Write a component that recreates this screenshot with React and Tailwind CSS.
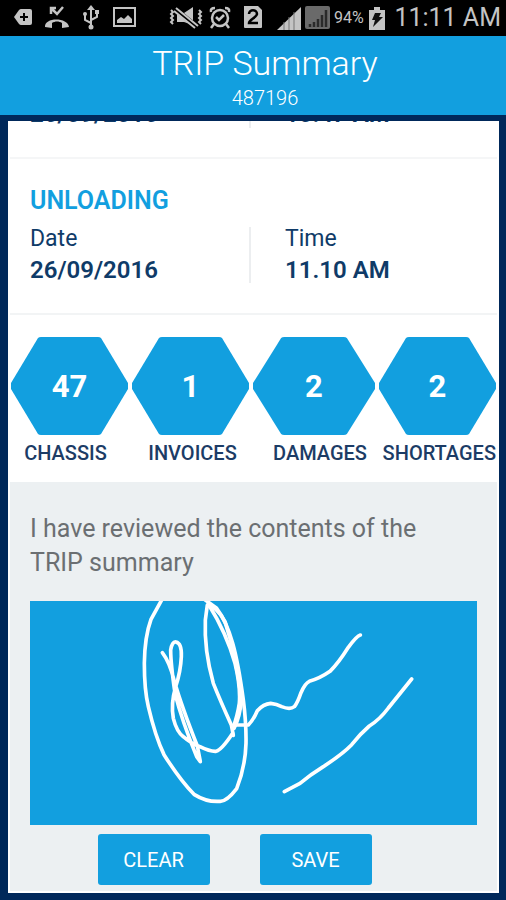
import React from 'react';

const stats = [
  { label: 'CHASSIS', value: 47, align: 'pr-2 text-center' },
  { label: 'INVOICES', value: 1, align: 'pl-1 text-center' },
  { label: 'DAMAGES', value: 2, align: 'pl-3 text-center' },
  { label: 'SHORTAGES', value: 2, align: 'text-right' },
];

const StatusBar = () => {
  return (
    <div className="flex h-9 items-center bg-black pl-3 pr-[5px] text-[#c4c4c4]">
      <svg viewBox="0 0 192 32" className="h-8 w-[192px] shrink-0" fill="none" stroke="currentColor">
        {/* battery saver tag */}
        <path d="M2 15l5-7q1-1 2-1h9q2 0 2 2v12q0 2-2 2H9q-1 0-2-1z" fill="currentColor" stroke="none" />
        <path d="M12 11v8M8 15h8" stroke="#000" strokeWidth="2" />
        {/* missed call */}
        <path d="M33 25c-1-10 23-10 24 0l-7 1v-5c-3-2-7-2-10 0v5z" fill="currentColor" stroke="none" />
        <path d="M39 12V6h5M39 6l6 6 6-7" strokeWidth="2.5" />
        {/* usb */}
        <path d="M79 7v18M79 21l-6-3v-6M79 18l6-3v-5" strokeWidth="2" />
        <path d="M75 8l4-5 4 5z" fill="currentColor" stroke="none" />
        <circle cx="79" cy="25" r="2.5" fill="currentColor" stroke="none" />
        <circle cx="73" cy="12" r="2" fill="currentColor" stroke="none" />
        <path d="M83 8h4v4h-4z" fill="currentColor" stroke="none" />
        {/* picture */}
        <path d="M102 6h21v18h-21z" strokeWidth="2" />
        <path d="M105 21v-3l4-3 3 2 4-4 4 4v4z" fill="currentColor" stroke="none" />
        {/* muted, vibrating */}
        <path d="M159 8l2 2-2 2 2 2-2 2 2 2-2 2 2 2M187 8l2 2-2 2 2 2-2 2 2 2-2 2 2 2" strokeWidth="2" />
        <path d="M165 11h7l9-6v18l-9-3h-7z" fill="currentColor" stroke="none" />
        <path d="M163 7l22 18" stroke="#000" strokeWidth="5" />
        <path d="M164 6l22 18M162 9l21 17" strokeWidth="2" />
      </svg>
      <svg viewBox="0 0 128 32" className="h-8 w-[128px] shrink-0" fill="none" stroke="currentColor">
        {/* alarm */}
        <circle cx="16" cy="16" r="8" strokeWidth="2.5" />
        <path d="M12 15l3 3 5-5M7 10q-1-4 4-4M25 10q1-4-4-4M10 22l-3 4M22 22l3 4" strokeWidth="2.5" />
        {/* sim 2 */}
        <path d="M40 4h14l4 4v17q0 1-1 1H41q-1 0-1-1z" fill="currentColor" stroke="none" />
        <path d="M45 12c0-5 8-5 8 0 0 3-8 6-8 9h9" stroke="#000" strokeWidth="2.5" />
        {/* signal */}
        <path d="M73 28L97 5v23z" fill="currentColor" stroke="none" />
        <path d="M80 20v8M85 15v13M90 10v18" stroke="#777" strokeWidth="1" />
        <rect x="101" y="4" width="25" height="23" rx="2" fill="#6a6a6a" stroke="none" />
        <path d="M106 25v-3M110 25v-5M114 25v-8M118 25V13M122 25V8" stroke="#2a2a2a" strokeWidth="2.5" />
      </svg>
      <span className="ml-[2px] text-base">94%</span>
      <svg viewBox="0 0 18 26" className="ml-1 h-[26px] w-[18px] shrink-0">
        <path d="M6 2h6v3h5v20H1V5h5z" fill="currentColor" />
        <path d="M7 8h6l-2 4h4L5 22l2-7H4z" fill="#111" />
      </svg>
      <span className="ml-auto text-[25px]">11:11 AM</span>
    </div>
  );
};

const Field = ({ label, value }) => {
  return (
    <dl className="flex-1 text-[#0f3b68]">
      <dt className="text-[23px] leading-6">{label}</dt>
      <dd className="text-2xl font-semibold leading-[38px]">{value}</dd>
    </dl>
  );
};

const Hexagon = ({ value }) => {
  return (
    <div className="relative flex h-[98px] items-center justify-center">
      <svg viewBox="0 0 117 98" preserveAspectRatio="none" className="absolute inset-0 h-full w-full">
        <path
          d="M30 0h57q2 0 3 1l27 45q1 3 0 6L90 97q-1 1-3 1H30q-2 0-3-1L0 52q-1-3 0-6L27 1q1-1 3-1z"
          fill="#129fdf"
        />
      </svg>
      <span className="relative pt-[2px] text-[31px] font-bold text-white">{value}</span>
    </div>
  );
};

const Signature = () => {
  return (
    <svg
      viewBox="-270 33 1341 672"
      role="img"
      aria-label="Signature"
      className="w-full bg-[#129fdf]"
      fill="none"
      stroke="#fff"
      strokeWidth="11"
      strokeLinecap="round"
      strokeLinejoin="round"
    >
      <path d="M125 30L93 88Q74 140 73 220Q73 300 85 350Q106 440 132 494Q180 570 222 613Q260 637 300 634Q320 635 350 596Q376 530 378 460Q379 400 370 330Q355 220 338 160Q320 95 290 55L256 30" />
      <path d="M127 188Q148 215 162 270Q185 350 232 468L241 515L230 500Q185 390 165 310Q152 220 152 180Q156 154 168 156Q186 160 184 200Q182 245 167 290Q152 340 160 385Q170 425 190 440Q215 462 240 470Q270 485 288 484Q305 480 338 430" />
      <path d="M340 436L334 405Q300 330 280 280Q252 180 256 90L262 45Q290 50 315 95Q350 200 364 330Q360 380 342 415" />
      <path d="M265 42Q320 130 345 220Q362 290 358 340Q352 380 340 410L346 405H385Q400 390 412 362Q430 342 452 340Q470 342 485 350Q510 360 523 350Q532 340 543 308Q555 280 568 274Q600 265 630 244Q655 220 685 172Q710 138 721 135" />
      <path d="M493 605L540 580Q570 555 610 530Q670 490 695 464Q720 432 748 408Q780 388 805 354L875 267" />
    </svg>
  );
};

const App = () => {
  return (
    <div className="min-h-screen bg-[#00285a] font-['Roboto','Liberation_Sans',sans-serif]">
      <StatusBar />
      <header className="flex h-[79px] flex-col items-center bg-[#129fdf] pl-6 pt-1 text-white">
        <h1 className="text-[34px] font-light leading-[46px]">TRIP Summary</h1>
        <p className="text-xl font-light leading-6">487196</p>
      </header>

      <main className="ml-2 mr-[7px] mt-[6px] border-2 border-t-0 border-white bg-white">
        {/* loading row, scrolled almost out of view */}
        <section className="flex h-[38px] items-end overflow-hidden border-b-2 border-[#f5f6f7] pb-[29px] pl-5 text-2xl font-semibold leading-7 text-[#0f3b68]">
          <span className="flex-1">26/09/2016</span>
          <span className="mr-[34px] h-7 w-[2px] bg-[#eceef0]"></span>
          <span className="w-[212px]">10.47 AM</span>
        </section>

        <section className="border-b-2 border-[#f2f4f5] pb-6 pl-5 pt-6">
          <h2 className="text-[25px] font-semibold leading-9 text-[#129fdf]">UNLOADING</h2>
          <div className="mt-2 flex">
            <Field label="Date" value="26/09/2016" />
            <div className="mb-[6px] mr-[34px] w-[2px] bg-[#eceef0]"></div>
            <div className="flex w-[212px]">
              <Field label="Time" value="11.10 AM" />
            </div>
          </div>
        </section>

        <section className="grid grid-cols-[117fr_117fr_122fr_117fr] gap-x-1 px-px pb-4 pt-[22px]">
          {stats.map((stat) => (
            <div key={stat.label} className="min-w-0">
              <Hexagon value={stat.value} />
              <p className={`whitespace-nowrap pt-[5px] text-xl font-medium leading-[26px] text-[#1c3c66] ${stat.align}`}>
                {stat.label}
              </p>
            </div>
          ))}
        </section>

        <section className="bg-[#ecf0f2] px-5 pb-[6px] pt-[30px]">
          <p className="pr-8 text-[25px] leading-[34px] text-[#6b6f72]">
            I have reviewed the contents of the TRIP summary
          </p>
          <div className="mt-[21px] flex">
            <Signature />
          </div>
          <div className="mt-[9px] flex justify-center gap-[50px] pr-[38px]">
            <button className="h-[51px] w-28 rounded-[3px] bg-[#129fdf] text-xl text-white">CLEAR</button>
            <button className="h-[51px] w-28 rounded-[3px] bg-[#129fdf] text-xl text-white">SAVE</button>
          </div>
        </section>
      </main>
    </div>
  );
};

export default App;
